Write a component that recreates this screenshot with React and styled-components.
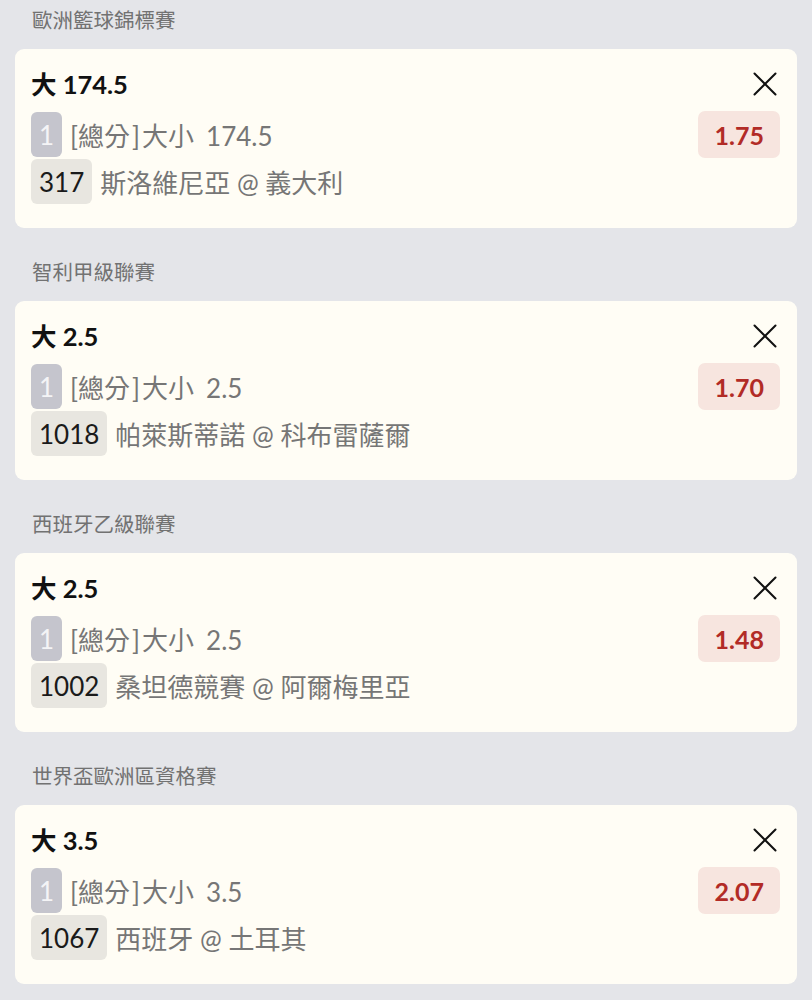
import React from "react";
import styled, { createGlobalStyle } from "styled-components";

const GlobalStyle = createGlobalStyle`
  body {
    margin: 0;
    background: #e4e5e9;
    font-family: Lato, "Noto Sans CJK TC", sans-serif;
  }
`;

const Page = styled.div`
  display: flex;
  flex-direction: column;
  gap: 24px;
  padding: 0 15px;
`;

const Section = styled.section`
  display: flex;
  flex-direction: column;
`;

const League = styled.div`
  height: 49px;
  padding: 6px 0 0 17px;
  box-sizing: border-box;
  font-size: 20.5px;
  line-height: 28px;
  color: #727272;
`;

const Card = styled.div`
  background: #fffdf5;
  border-radius: 9px;
  height: 179px;
  box-sizing: border-box;
  padding: 17px 17px 0 16px;
  display: flex;
  justify-content: space-between;
`;

const Left = styled.div`
  display: flex;
  flex-direction: column;
`;

const Title = styled.div`
  font-size: 25.5px;
  font-weight: 700;
  line-height: 36px;
  color: #111;
  margin-bottom: 10px;
`;

const Row = styled.div`
  display: flex;
  align-items: center;
  gap: 8px;
  font-size: 26px;
  color: #767676;
  & + & {
    margin-top: 2px;
  }
`;

const Bracket = styled.span`
  margin: 0 2px;
`;

const Num = styled.span`
  margin-left: 12px;
`;

const Badge = styled.span`
  height: 45px;
  min-width: 30px;
  box-sizing: border-box;
  padding: 0 8px;
  border-radius: 6px;
  display: inline-flex;
  align-items: center;
  justify-content: center;
  font-size: 26px;
  background: ${(p) => (p.$muted ? "#c5c5cd" : "#e8e6e0")};
  color: ${(p) => (p.$muted ? "#f4f4f6" : "#1a1a1a")};
`;

const Right = styled.div`
  display: flex;
  flex-direction: column;
  align-items: flex-end;
`;

const Close = styled.button`
  border: none;
  background: none;
  padding: 0;
  margin: 6px 3px 0 0;
  width: 24px;
  height: 24px;
  cursor: pointer;
  display: flex;
`;

const Odds = styled.div`
  margin-top: 15px;
  height: 47px;
  padding: 0 16px 0 17px;
  border-radius: 7px;
  background: #f7e5df;
  color: #b22b26;
  font-size: 25px;
  font-weight: 700;
  display: flex;
  align-items: center;
`;

const bets = [
  { league: "歐洲籃球錦標賽", pick: "大 174.5", line: "174.5", odds: "1.75", code: "317", match: "斯洛維尼亞 @ 義大利" },
  { league: "智利甲級聯賽", pick: "大 2.5", line: "2.5", odds: "1.70", code: "1018", match: "帕萊斯蒂諾 @ 科布雷薩爾" },
  { league: "西班牙乙級聯賽", pick: "大 2.5", line: "2.5", odds: "1.48", code: "1002", match: "桑坦德競賽 @ 阿爾梅里亞" },
  { league: "世界盃歐洲區資格賽", pick: "大 3.5", line: "3.5", odds: "2.07", code: "1067", match: "西班牙 @ 土耳其" },
];

const CloseIcon = () => (
  <svg width="24" height="24" viewBox="0 0 24 24" fill="none" stroke="#111" strokeWidth="2" strokeLinecap="round">
    <path d="M1.5 1.5 22.5 22.5M22.5 1.5 1.5 22.5" />
  </svg>
);

export default function App() {
  return (
    <>
      <GlobalStyle />
      <Page>
        {bets.map((b) => (
          <Section key={b.code}>
            <League>{b.league}</League>
            <Card>
              <Left>
                <Title>{b.pick}</Title>
                <Row>
                  <Badge $muted>1</Badge>
                  <span>
                    [總分<Bracket>]</Bracket>大小<Num>{b.line}</Num>
                  </span>
                </Row>
                <Row>
                  <Badge>{b.code}</Badge>
                  <span>{b.match}</span>
                </Row>
              </Left>
              <Right>
                <Close aria-label="remove">
                  <CloseIcon />
                </Close>
                <Odds>{b.odds}</Odds>
              </Right>
            </Card>
          </Section>
        ))}
      </Page>
    </>
  );
}
